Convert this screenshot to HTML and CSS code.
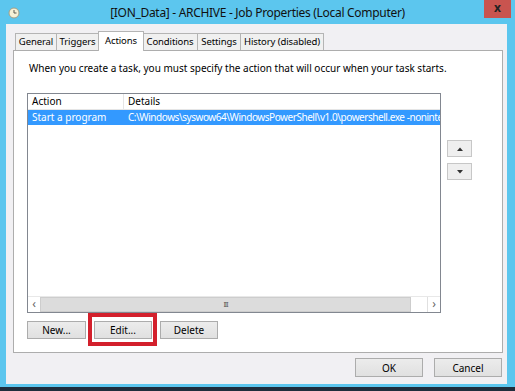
FILE: index.html
```html
<html>
<head>
    <title>Job Properties</title>
    <link rel="stylesheet" href="styles.css">
</head>
<body>
    <div class="window">
        <div class="titlebar">
            <span class="app-icon">
                <svg width="12" height="12" viewBox="0 0 12 12">
                    <circle cx="6" cy="6" r="5" fill="#f6f1d6" stroke="#a49f86" stroke-width="1"/>
                    <path d="M6 3 V6 H8.5" fill="none" stroke="#5b5a50" stroke-width="1"/>
                </svg>
            </span>
            <span class="title">[ION_Data] - ARCHIVE - Job Properties (Local Computer)</span>
            <span class="close">x</span>
        </div>

        <div class="client">
            <div class="tabs">
                <div class="tab t-general">General</div>
                <div class="tab t-triggers">Triggers</div>
                <div class="tab t-actions active">Actions</div>
                <div class="tab t-conditions">Conditions</div>
                <div class="tab t-settings">Settings</div>
                <div class="tab t-history">History (disabled)</div>
            </div>

            <div class="panel">
                <p class="intro">When you create a task, you must specify the action that will occur when your task starts.</p>

                <div class="list-area">
                    <div class="listbox">
                        <div class="lv-header">
                            <div class="col col-action">Action</div>
                            <div class="col col-details">Details</div>
                        </div>
                        <div class="lv-row selected">
                            <div class="col col-action">Start a program</div>
                            <div class="col col-details path">C:\Windows\syswow64\WindowsPowerShell\v1.0\powershell.exe -noninte</div>
                        </div>
                        <div class="lv-fill"></div>
                        <div class="hscroll">
                            <div class="arrow">&lsaquo;</div>
                            <div class="thumb">III</div>
                            <div class="track"></div>
                            <div class="arrow right">&rsaquo;</div>
                        </div>
                    </div>

                    <div class="move-buttons">
                        <button class="small-btn">
                            <svg width="6" height="4" viewBox="0 0 6 4"><polygon points="0,4 3,0.5 6,4" fill="#333"/></svg>
                        </button>
                        <button class="small-btn">
                            <svg width="6" height="4" viewBox="0 0 6 4"><polygon points="0,0 6,0 3,3.5" fill="#333"/></svg>
                        </button>
                    </div>
                </div>

                <div class="action-buttons">
                    <button class="btn">New...</button>
                    <button class="btn marked">Edit...</button>
                    <button class="btn">Delete</button>
                </div>
            </div>

            <div class="dialog-buttons">
                <button class="btn dlg">OK</button>
                <button class="btn dlg">Cancel</button>
            </div>
        </div>

        <div class="taskbar"></div>
    </div>
</body>
</html>
```

FILE: styles.css
```css
body {
    margin: 0;
    font-family: "Noto Sans", sans-serif;
    font-size: 10px;
    color: #000;
}

.window {
    width: 515px;
    height: 391px;
    background-color: #5cc6ee;
    display: flex;
    flex-direction: column;
    overflow: hidden;
}

/* title bar */
.titlebar {
    height: 24px;
    display: grid;
    grid-template-columns: 40px 1fr 40px;
    align-items: start;
}

.app-icon {
    margin: 7px 0 0 8px;
    height: 12px;
}

.title {
    text-align: center;
    font-size: 12px;
    letter-spacing: -0.3px;
    line-height: 26px;
    color: #111;
    white-space: nowrap;
}

.close {
    justify-self: end;
    margin-right: 4px;
    width: 27px;
    height: 18px;
    background-color: #c9544f;
    color: #222;
    font-weight: bold;
    font-size: 12px;
    line-height: 16px;
    text-align: center;
}

/* dialog client area */
.client {
    width: 501px;
    height: 360px;
    margin-left: 6px;
    background-color: #f1f0f3;
    padding-top: 7px;
    box-sizing: border-box;
}

.tabs {
    display: flex;
    align-items: flex-end;
    margin-left: 9px;
    height: 19px;
}

.tab {
    height: 17px;
    box-sizing: border-box;
    border: 1px solid #b4b4b4;
    border-bottom: none;
    border-left: none;
    background-color: #f0f0f0;
    font-size: 9.5px;
    line-height: 16px;
    text-align: center;
    letter-spacing: -0.1px;
    white-space: nowrap;
}

.tab:first-child {
    border-left: 1px solid #b4b4b4;
}

.t-general { width: 42px; }
.t-triggers { width: 42px; }
.t-actions { width: 46px; }
.t-conditions { width: 55px; }
.t-settings { width: 43px; }
.t-history { width: 83px; }

.tab.active {
    position: relative;
    z-index: 1;
    height: 20px;
    margin-bottom: -1px;
    margin-left: -1px;
    margin-right: -1px;
    background-color: #fff;
    border-left: 1px solid #b4b4b4;
    line-height: 17px;
}

.panel {
    margin-left: 7px;
    width: 490px;
    height: 303px;
    box-sizing: border-box;
    border: 1px solid #adadad;
    background-color: #fff;
    padding: 0 0 0 13px;
}

.intro {
    margin: 10px 0 0 2px;
    line-height: 15px;
    white-space: nowrap;
}

.list-area {
    display: flex;
    align-items: flex-start;
    margin-top: 17px;
}

.listbox {
    width: 414px;
    height: 220px;
    box-sizing: border-box;
    border: 1px solid #828790;
    display: flex;
    flex-direction: column;
    overflow: hidden;
}

.lv-header,
.lv-row {
    display: flex;
    height: 15px;
    line-height: 15px;
    white-space: nowrap;
}

.lv-header {
    height: 16px;
    border-bottom: 1px solid #e5e5e5;
    box-sizing: border-box;
}

.col {
    padding-left: 4px;
    box-sizing: border-box;
    overflow: hidden;
}

.col-action {
    width: 96px;
    flex: none;
}

.lv-header .col-action {
    border-right: 1px solid #e5e5e5;
}

.col-details {
    flex: 1;
}

.col-details.path {
    letter-spacing: -0.45px;
}

.lv-row.selected {
    background-color: #3399ff;
    color: #fff;
}

.lv-fill {
    flex: 1;
}

.hscroll {
    display: flex;
    height: 15px;
    border-top: 1px solid #e8e8e8;
    background-color: #fff;
}

.hscroll .arrow {
    width: 12px;
    text-align: center;
    color: #666;
    font-size: 12px;
    line-height: 13px;
}

.hscroll .arrow.right {
    border-left: 1px solid #e0e0e0;
}

.thumb {
    width: 371px;
    box-sizing: border-box;
    background-color: #dcdcdc;
    border: 1px solid #cdcdcd;
    text-align: center;
    font-size: 7px;
    line-height: 13px;
    color: #555;
    letter-spacing: -1px;
}

.track {
    flex: 1;
}

.move-buttons {
    display: flex;
    flex-direction: column;
    gap: 6px;
    margin: 47px 0 0 6px;
}

.small-btn {
    width: 25px;
    height: 17px;
    padding: 0;
    border: 1px solid #c7c7c7;
    background-color: #efefef;
    display: flex;
    align-items: center;
    justify-content: center;
}

/* push buttons */
.btn {
    height: 18px;
    padding: 0;
    border: 1px solid #acacac;
    background: linear-gradient(#ececec, #e0e0e0);
    font-family: "Noto Sans", sans-serif;
    font-size: 10px;
    color: #000;
    line-height: 16px;
}

.action-buttons {
    display: flex;
    gap: 8px;
    margin-top: 8px;
}

.action-buttons .btn {
    width: 58px;
}

.action-buttons .btn:first-child {
    width: 59px;
}

/* red highlight drawn round the Edit button */
.btn.marked {
    position: relative;
}

.btn.marked::after {
    content: "";
    position: absolute;
    top: -9px;
    left: -7px;
    right: -6px;
    bottom: -8px;
    border: 4px solid #d3202c;
}

.dialog-buttons {
    display: flex;
    justify-content: flex-end;
    gap: 11px;
    margin: 5px 5px 0 0;
}

.btn.dlg {
    width: 68px;
    height: 19px;
}

.taskbar {
    height: 4px;
    margin-top: 3px;
    background-color: #1f2d3c;
}
```
